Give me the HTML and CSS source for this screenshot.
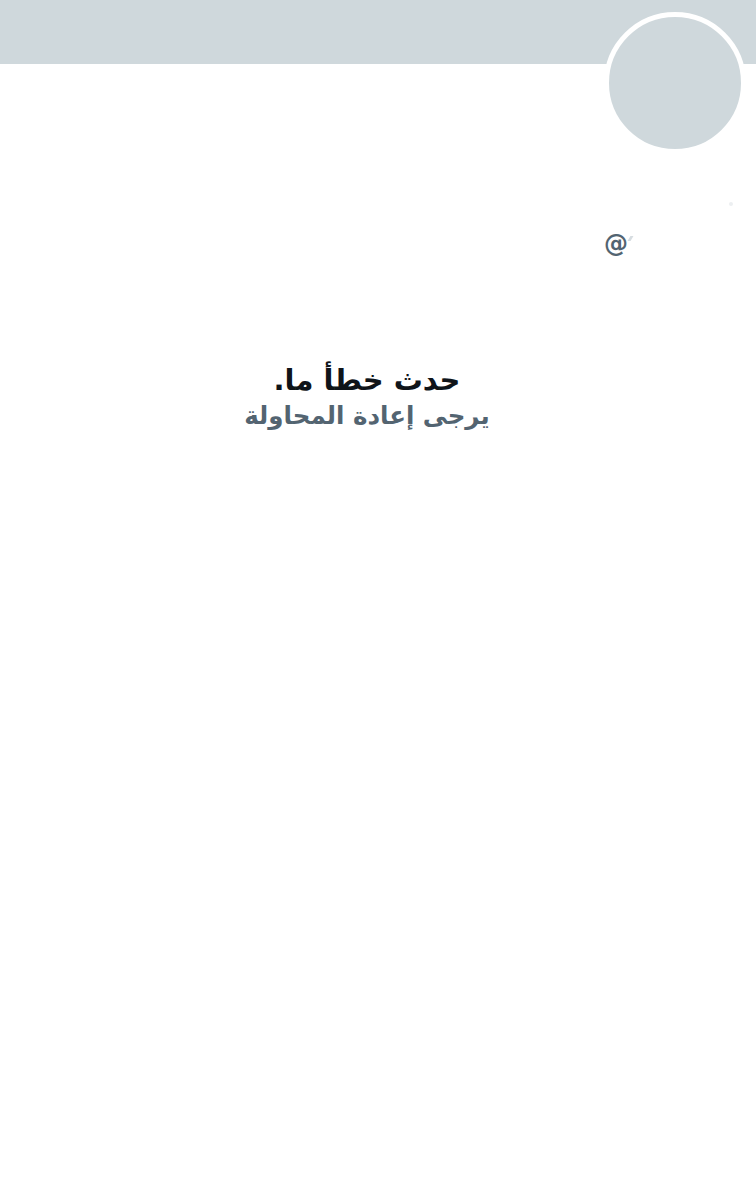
FILE: index.html
```html
<!DOCTYPE html>
<html lang="ar" dir="rtl">
<head>
<meta charset="utf-8">
<link rel="stylesheet" href="styles.css">
</head>
<body>
<div class="page">
  <div class="banner"></div>
  <div class="profile">
    <div class="avatar-row">
      <div class="avatar"></div>
    </div>
    <div class="dot-row"><span class="dot"></span></div>
    <div class="handle"><span class="at">@</span><span class="tick"></span></div>
  </div>
  <div class="error">
    <div class="title">حدث خطأ ما.</div>
    <div class="subtitle">يرجى إعادة المحاولة</div>
  </div>
</div>
</body>
</html>
```
FILE: styles.css
```css
html, body {
  margin: 0;
  padding: 0;
  background: #ffffff;
}
.page {
  width: 756px;
  height: 1200px;
  overflow: hidden;
  font-family: "DejaVu Sans", "Noto Sans", sans-serif;
}
.banner {
  height: 64px;
  background: #cfd8dc;
}
.profile {
  height: 200px;
  padding-right: 10px;
}
.avatar-row {
  display: flex;
  justify-content: flex-start;
  margin-top: -52px;
}
.avatar {
  width: 132px;
  height: 132px;
  border-radius: 50%;
  background: #cfd8dc;
  border: 5px solid #ffffff;
}
.dot-row {
  display: flex;
  justify-content: flex-start;
  padding-right: 13px;
  margin-top: 48px;
  height: 4px;
}
.dot {
  width: 4px;
  height: 4px;
  border-radius: 50%;
  background: #eceff1;
}
.handle {
  margin-top: 23px;
  padding-right: 114px;
  display: flex;
  align-items: center;
  direction: ltr;
  justify-content: flex-end;
}
.at {
  font-family: "DejaVu Sans", sans-serif;
  font-weight: bold;
  font-size: 24px;
  line-height: 30px;
  color: #536471;
}
.tick {
  width: 3px;
  height: 5px;
  background: #d6dce0;
  margin-top: -12px;
  margin-left: 1px;
  transform: skewX(-30deg);
}
.error {
  margin-top: 151px;
  text-align: center;
  padding-right: 22px;
}
.title {
  font-weight: bold;
  font-size: 29px;
  color: #0f1419;
  line-height: 35px;
}
.subtitle {
  font-weight: bold;
  font-size: 24.5px;
  color: #536471;
  line-height: 35px;
}
```
